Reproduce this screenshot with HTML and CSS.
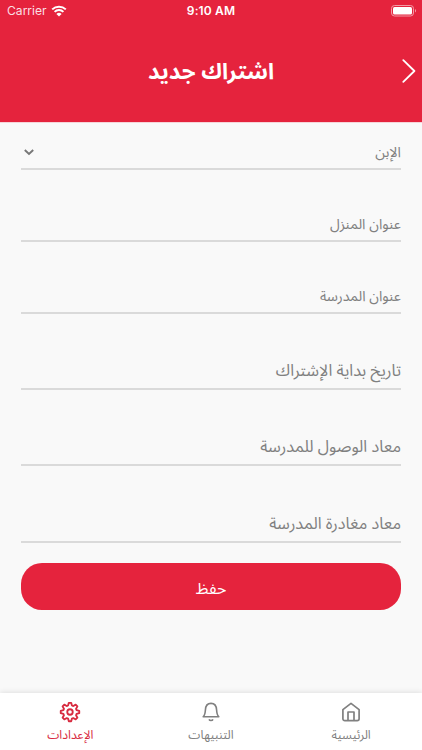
FILE: index.html
```
<!DOCTYPE html>
<html lang="ar" dir="rtl">
<head>
<meta charset="utf-8">
<title>اشتراك جديد</title>
<link rel="stylesheet" href="styles.css">
</head>
<body>
<div class="app">
  <header class="header">
    <div class="status" dir="ltr">
      <div class="carrier"><span>Carrier</span>
        <svg width="16" height="12" viewBox="0 0 16 12"><path d="M1.200 4.400a9.800 9.800 0 0 1 13.600 0M3.600 6.900a6.300 6.300 0 0 1 8.800 0" fill="none" stroke="currentColor" stroke-width="2"/><path d="M8 11.600 5.400 9a3.700 3.700 0 0 1 5.200 0z" fill="currentColor"/></svg>
      </div>
      <span class="time">9:10 AM</span>
      <svg class="battery" width="26" height="12" viewBox="0 0 26 12"><rect x=".5" y=".5" width="22" height="10.500" rx="3" fill="none" stroke="#f39aa6"/><rect x="2" y="2" width="19" height="7.500" rx="1.500" fill="#fff"/><path d="M24 4v3.600c1.400-.6 1.400-3 0-3.600z" fill="#f39aa6"/></svg>
    </div>
    <div class="titlebar">
      <svg class="back" width="14" height="24" viewBox="0 0 14 24"><path d="M1.300 1.200 12.400 12 1.300 22.800" fill="none" stroke="#fff" stroke-width="1.800" stroke-linecap="round" stroke-linejoin="round"/></svg>
      <h1>اشتراك جديد</h1>
    </div>
  </header>
  <main class="form">
    <div class="field select"><span>الإبن</span>
      <svg width="10" height="7" viewBox="0 0 10 7"><path d="M.8 1 5 5 9.200 1" fill="none" stroke="#777" stroke-width="1.900"/></svg>
    </div>
    <div class="field"><span>عنوان المنزل</span></div>
    <div class="field"><span>عنوان المدرسة</span></div>
    <div class="field large"><span>تاريخ بداية الإشتراك</span></div>
    <div class="field large"><span>معاد الوصول للمدرسة</span></div>
    <div class="field large last"><span>معاد مغادرة المدرسة</span></div>
    <button class="save" type="button"><span>حفظ</span></button>
  </main>
  <nav class="tabs">
    <a class="tab">
      <svg width="20" height="20" viewBox="0 0 20 20"><path d="M1.900 7.600 10 1.400l8.100 6.200v9.200a1.900 1.900 0 0 1-1.900 1.900H3.800a1.900 1.900 0 0 1-1.900-1.900zM7 18.500v-8.500h6v8.500" fill="none" stroke="currentColor" stroke-width="1.700" stroke-linejoin="round"/></svg>
      <span>الرئيسية</span>
    </a>
    <a class="tab">
      <svg width="20" height="20" viewBox="0 0 20 20"><path d="M2.200 14.800h15.600c-1.700-1.600-2-3-2.200-6.800C15.400 3.800 13.400 1.400 10 1.400S4.600 3.800 4.400 8c-.2 3.800-.5 5.200-2.200 6.800z" fill="none" stroke="currentColor" stroke-width="1.600" stroke-linejoin="round"/><path d="M8 17.300c.7 1.500 3.300 1.500 4 0" fill="none" stroke="currentColor" stroke-width="1.600"/></svg>
      <span>التنبيهات</span>
    </a>
    <a class="tab active">
      <svg width="22" height="22" viewBox="0 0 24 24"><path d="M10.700 2h2.600l.8 2.900 1.500.6 2.600-1.500 1.900 1.900-1.500 2.600.6 1.500 2.900.8v2.500l-2.900.8-.6 1.500 1.500 2.600-1.900 1.900-2.600-1.500-1.500.6-.8 2.900h-2.600l-.8-2.900-1.500-.6-2.600 1.500-1.900-1.900 1.500-2.600-.6-1.500-2.900-.8v-2.500l2.900-.8.6-1.500-1.500-2.600 1.900-1.900 2.600 1.500 1.500-.6z" fill="none" stroke="currentColor" stroke-width="2" stroke-linejoin="round"/><circle cx="12" cy="12" r="3" fill="none" stroke="currentColor" stroke-width="2"/></svg>
      <span>الإعدادات</span>
    </a>
  </nav>
</div>
</body>
</html>
```
FILE: styles.css
```
* { box-sizing: border-box; }
body { margin: 0; font-family: "Noto Sans", "Noto Sans Arabic", sans-serif; }
.app { width: 422px; height: 750px; display: flex; flex-direction: column; background: #f9f9f9; color: #808080; overflow: hidden; }
svg { display: block; flex: none; }
span, h1 { white-space: nowrap; }
.header { height: 122px; background: #e5233d; color: #fff; flex: none; box-shadow: 0 0 1px #e5233d; }
.status { height: 22px; display: grid; grid-template-columns: 1fr auto 1fr; align-items: center; padding: 0 5px 0 7px; font: 12.100px/22px Inter, sans-serif; }
.carrier { display: flex; align-items: center; gap: 4px; color: #fbdfe3; }
.carrier svg { color: #fff; }
.time { font-weight: 600; font-size: 12px; letter-spacing: .15px; transform: translateX(-1px); }
.battery { justify-self: end; }
.titlebar { height: 97px; display: grid; grid-template-columns: 20px 1fr 20px; align-items: center; padding: 0 3px; }
.back { justify-self: center; }
h1 { margin: 0; font-size: 22.300px; line-height: 30px; font-weight: 700; text-align: center; }
.form { flex: 1; padding: 0 21px; }
.field { height: 72px; border-bottom: 2px solid #dadada; display: flex; align-items: flex-end; padding-bottom: 5px; font-size: 14.200px; line-height: 22px; }
.field.select { height: 48px; justify-content: space-between; }
.select svg { margin: 0 0 7px 3px; }
.field.large { height: 76px; font-size: 16.300px; line-height: 24px; padding-bottom: 6px; }
.field.last { height: 77px; }
.save { display: flex; align-items: center; justify-content: center; width: 100%; height: 47px; margin: 20px 0 0; padding: 3px 0 0; border: 0; border-radius: 21px; background: #e5233d; color: #fff; font: 16px/24px "Noto Sans", "Noto Sans Arabic", sans-serif; }
.tabs { height: 57px; flex: none; display: grid; grid-template-columns: repeat(3, 1fr); background: #fff; box-shadow: 0 -1px 5px rgba(0,0,0,.1); }
.tab { display: flex; flex-direction: column; align-items: center; padding-top: 9px; font-size: 12.200px; line-height: 20px; }
.tab span { margin-top: 3px; }
.tab:first-child { padding-right: 1px; }
.tab.active { color: #d82b40; padding-top: 8px; }
.tab.active span { margin-top: 2px; }
```
